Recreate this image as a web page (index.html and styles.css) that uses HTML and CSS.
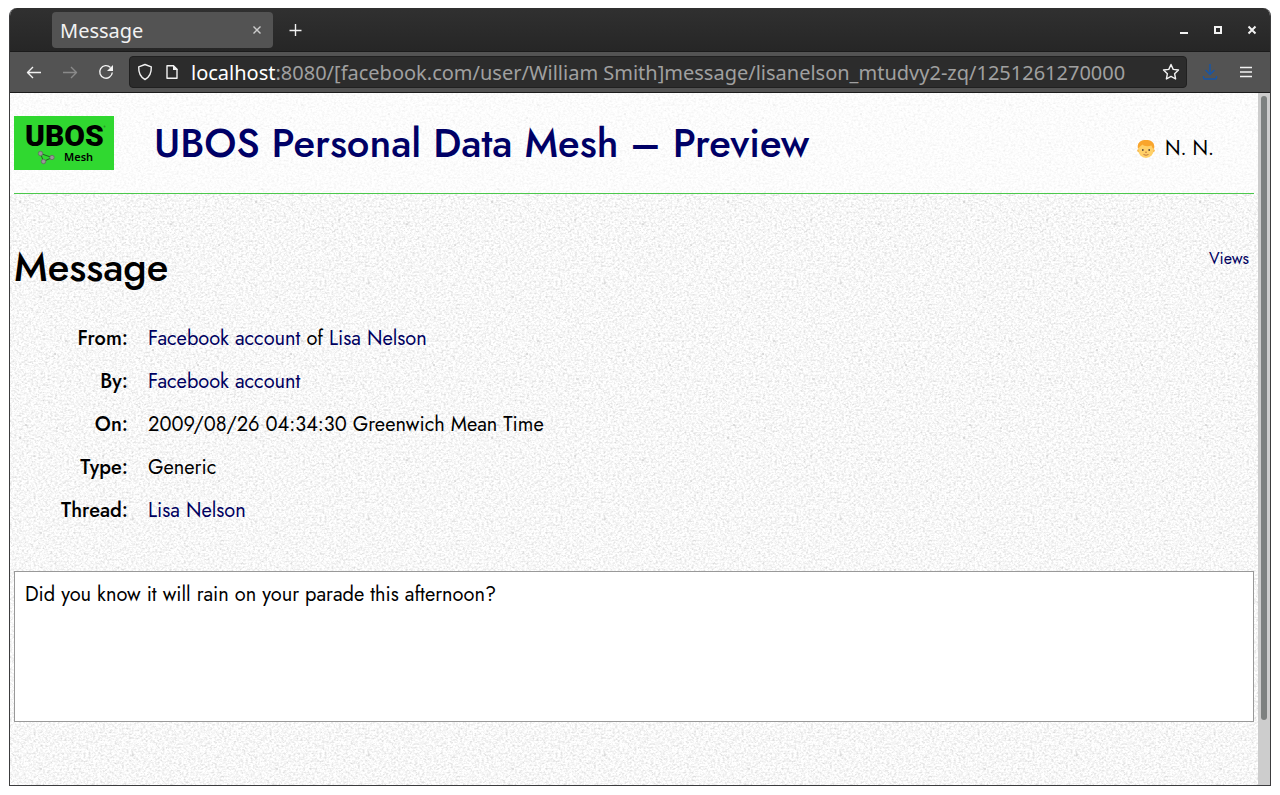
FILE: index.html
```html
<!DOCTYPE html>
<html lang="en">
<head>
<meta charset="utf-8">
<title>Message</title>
<link rel="stylesheet" href="styles.css">
</head>
<body>
<div class="window">
  <div class="titlebar">
    <div class="tab"><span>Message</span>
      <button class="icon-button tab-close" aria-label="Close tab"><svg width="10" height="10" viewBox="0 0 10 10"><path d="M1.500 1.500l7 7M8.500 1.500l-7 7"/></svg></button>
    </div>
    <button class="icon-button new-tab" aria-label="New tab"><svg width="14" height="14" viewBox="0 0 14 14"><path d="M7.500 1v12M1.500 7.500h12"/></svg></button>
    <div class="window-controls">
      <button class="icon-button" aria-label="Minimize"><svg width="10" height="10" viewBox="0 0 10 10"><path class="solid" d="M1 7h8v2H1z"/></svg></button>
      <button class="icon-button" aria-label="Maximize"><svg width="10" height="10" viewBox="0 0 10 10"><path class="thick" d="M2 2h6v6H2z"/></svg></button>
      <button class="icon-button" aria-label="Close"><svg width="10" height="10" viewBox="0 0 10 10"><path class="thick" d="M1.500 1.500l7 7M8.500 1.500l-7 7"/></svg></button>
    </div>
  </div>
  <div class="toolbar">
    <div class="navigation">
      <button class="icon-button" aria-label="Back"><svg width="16" height="16" viewBox="0 0 16 16"><path d="M15 8.500H1.500M7 3L1.500 8.500 7 14"/></svg></button>
      <button class="icon-button dim" aria-label="Forward"><svg width="16" height="16" viewBox="0 0 16 16"><path d="M1 8.500h13.500M9 3l5.500 5.500L9 14"/></svg></button>
      <button class="icon-button" aria-label="Reload"><svg width="16" height="16" viewBox="0 0 16 16"><path d="M12.500 3.500A6.300 6.300 0 1 0 14.300 8.500"/><path class="solid" d="M15 1v6H9z"/></svg></button>
    </div>
    <div class="address-bar">
      <svg width="16" height="18" viewBox="0 0 16 18"><path d="M8 1.500l6.300 2.300C14.500 9.500 13 14 8 16.500 3 14 1.500 9.500 1.700 3.800z"/></svg>
      <svg width="14" height="16" viewBox="0 0 14 16"><path d="M2 1.800h6.500L12 5.300v9H2z"/><path class="solid" d="M8 1v5h5z"/></svg>
      <div class="address" role="textbox" aria-label="Address" contenteditable="true" spellcheck="false"><span class="host">localhost</span>:8080/[facebook.com/user/William Smith]message/lisanelson_mtudvy2-zq/1251261270000</div>
      <button class="icon-button" aria-label="Bookmark"><svg width="18" height="18" viewBox="0 0 18 18"><path d="M9 1.500l2.200 4.900 5.300.6-3.900 3.700 1 5.300L9 13.400 4.400 16l1-5.300L1.500 7l5.300-.6z"/></svg></button>
    </div>
    <div class="tools">
      <button class="icon-button download" aria-label="Downloads"><svg width="16" height="16" viewBox="0 0 16 16"><path d="M8 0v10M3.500 6L8 10.500 12.500 6M1.500 12v1.500a1.500 1.500 0 0 0 1.500 1.500h10a1.500 1.500 0 0 0 1.500-1.500V12"/></svg></button>
      <button class="icon-button" aria-label="Menu"><svg width="14" height="12" viewBox="0 0 14 12"><path d="M1 1.500h12M1 6h12M1 10.500h12"/></svg></button>
    </div>
  </div>
  <div class="viewport">
    <div class="page">
      <header class="masthead">
        <svg class="logo" width="100" height="54" viewBox="0 0 100 54" role="img" aria-label="UBOS Mesh">
          <path fill="#30d830" d="M0 0h100v54H0z"/>
          <text class="logo-name" x="11" y="30">UBOS</text>
          <path fill="none" stroke="#245f24" d="M26.500 37.500l11.500 4-8.500 4z"/>
          <g fill="#999" stroke="#666" stroke-width=".8"><circle cx="26.500" cy="37.500" r="2.200"/><circle cx="38" cy="41.500" r="2.200"/><circle cx="29.500" cy="45.500" r="2.200"/></g>
          <text class="logo-product" x="50" y="45">Mesh</text>
          <circle cx="90.500" cy="10.500" r="1" fill="#289828"/>
        </svg>
        <a class="site-title" href="#">UBOS Personal Data Mesh – Preview</a>
        <div class="user">
          <svg width="18" height="20" viewBox="0 0 18 20"><circle cx="1.800" cy="11.500" r="1.500" fill="#f4aa37"/><circle cx="16.200" cy="11.500" r="1.500" fill="#f4aa37"/><ellipse cx="9" cy="10.500" rx="7.800" ry="8.500" fill="#ffd068"/><path fill="#f9a52c" d="M1 10C-.5 3.500 4 1 9 1s9.500 2.500 8 9l-1.500-1L14.500 6.500C10 8 7 7 5.500 5.500L2.500 8z"/><circle cx="5.800" cy="11" r=".9" fill="#58453a"/><circle cx="12.200" cy="11" r=".9" fill="#58453a"/><path fill="none" stroke="#c07840" d="M6.500 15.500q2.500 1.500 5 0M8 13.200h2"/></svg>
          <span>N. N.</span>
        </div>
      </header>
      <main>
        <div class="heading">
          <h1>Message</h1>
          <a href="#">Views</a>
        </div>
        <dl class="fields">
          <dt>From:</dt><dd><a href="#">Facebook account</a> of <a href="#">Lisa Nelson</a></dd>
          <dt>By:</dt><dd><a href="#">Facebook account</a></dd>
          <dt>On:</dt><dd>2009/08/26 04:34:30 Greenwich Mean Time</dd>
          <dt>Type:</dt><dd>Generic</dd>
          <dt>Thread:</dt><dd><a href="#">Lisa Nelson</a></dd>
        </dl>
        <div class="message">Did you know it will rain on your parade this afternoon?</div>
      </main>
    </div>
    <div class="scrollbar"><div class="thumb"></div></div>
  </div>
</div>
</body>
</html>
```
FILE: styles.css
```css
* { box-sizing: border-box; }
body {
  margin: 0;
  padding: 8px 9px 9px;
  min-height: 100vh;
  display: flex;
  background: #fff;
  font-family: Jost, Lato, sans-serif;
  font-size: 20px;
  line-height: 28px;
  color: #000;
}
a { color: #000060; text-decoration: none; }
svg { flex: none; display: block; }
.window {
  flex: 1;
  min-width: 0;
  display: flex;
  flex-direction: column;
  border: 1px solid #3c3c3e;
  border-top: 0;
  border-radius: 8px 8px 0 0;
  overflow: hidden;
}
.titlebar, .toolbar { display: flex; align-items: center; font-family: "Noto Sans", sans-serif; color: #f2f2f2; }
.titlebar {
  height: 44px;
  padding: 0 9px 0 42px;
  background: linear-gradient(#303030, #262626);
  border-top: 1px solid #303030;
  border-bottom: 1px solid #1b1b1b;
}
.toolbar {
  height: 41px;
  gap: 15px;
  padding: 0 17px 0 16px;
  background: #535353;
  border-bottom: 1px solid #1b1b1b;
}
.icon-button {
  display: flex;
  align-items: center;
  justify-content: center;
  padding: 0;
  border: 0;
  background: none;
  color: inherit;
}
.titlebar path, .toolbar path { fill: none; stroke: currentColor; stroke-width: 1.4; stroke-linejoin: round; }
.titlebar .solid, .toolbar .solid { fill: currentColor; stroke: none; }
.titlebar .thick { stroke-width: 2; stroke-linejoin: miter; }
.tab {
  width: 221px;
  height: 36px;
  display: flex;
  align-items: center;
  justify-content: space-between;
  padding: 2px 11px 0 8px;
  border-radius: 4px;
  background: #535353;
}
.tab-close { color: #ccc; padding-bottom: 2px; }
.new-tab { margin-left: 15px; }
.window-controls { display: flex; gap: 24px; margin-left: auto; padding-right: 4px; }
.navigation { display: flex; gap: 20px; }
.dim { color: #8a8a8a; }
.address-bar {
  flex: 1;
  min-width: 0;
  height: 32px;
  display: flex;
  align-items: center;
  gap: 12px;
  padding: 0 6px 0 7px;
  border: 1px solid #202020;
  border-radius: 4px;
  background: #2c2c2c;
}
.address { flex: 1; min-width: 0; padding-top: 2px; overflow: hidden; white-space: nowrap; color: #a0a0a0; outline: 0; }
.host { color: #fff; }
.tools { display: flex; align-items: center; gap: 21px; }
.download { color: #1656a8; }
.viewport { flex: 1; display: flex; }
.page {
  flex: 1;
  min-width: 0;
  padding: 0 4px;
  background-color: #f5f5f5;
  background-image:
    linear-gradient(rgba(255, 255, 255, .6), rgba(255, 255, 255, .6) 100px, transparent 100px),
    url("data:image/svg+xml,%3Csvg xmlns='http://www.w3.org/2000/svg' width='236' height='236'%3E%3Cfilter id='p' x='0' y='0' width='100%25' height='100%25' color-interpolation-filters='sRGB'%3E%3CfeTurbulence type='fractalNoise' baseFrequency='.42 .52' numOctaves='4' seed='4' stitchTiles='stitch'/%3E%3CfeColorMatrix values='.24 .14 0 0 .78 .24 .14 0 0 .78 .24 .14 0 0 .78 0 0 0 0 1'/%3E%3C/filter%3E%3Crect width='236' height='236' filter='url(%23p)'/%3E%3Cpath stroke='%23c4c4c4' d='M44 25h2M55 12h2M94 50h3M15 96h2M46 99h2M9 109h2M92 127h2M160 131h2M187 36h2M142 21h2M208 152h2M122 190h2M30 204h2'/%3E%3C/svg%3E");
}
.masthead {
  height: 101px;
  display: flex;
  align-items: center;
  gap: 40px;
  padding-right: 40px;
  border-bottom: 1px solid #4cc84c;
}
.logo-name { font: 900 30px Roboto, sans-serif; }
.logo-product { font: 600 11px/11px "Noto Sans", sans-serif; }
.site-title { font-size: 40px; line-height: 52px; font-weight: 500; color: #000066; }
.user { display: flex; align-items: center; gap: 10px; margin-left: auto; padding-top: 11px; }
.heading { display: flex; justify-content: space-between; align-items: flex-start; padding: 49px 5px 0 0; }
h1 { margin: 0; font-size: 40px; line-height: 48px; font-weight: 500; }
.heading a { font-size: 16px; line-height: 32px; }
.fields {
  display: grid;
  grid-template-columns: 114px 1fr;
  column-gap: 20px;
  row-gap: 15px;
  margin: 34px 0 46px;
}
.fields dt { text-align: right; font-weight: 500; }
.fields dd { margin: 0; }
.message {
  min-height: 151px;
  padding: 9px 10px;
  border: 1px solid #999;
  background: #fff;
}
.scrollbar { width: 12px; padding: 3px; background: #cdcdcd; }
.thumb { height: 91%; width: 6px; border-radius: 3px; background: #7d8180; }
```
